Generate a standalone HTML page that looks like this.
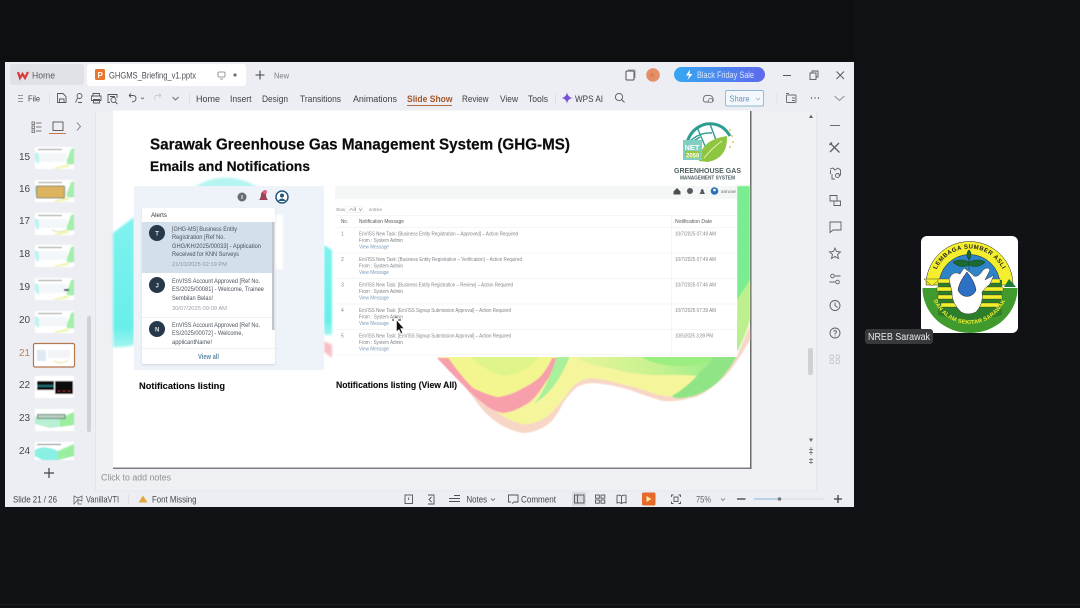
<!DOCTYPE html>
<html><head><meta charset="utf-8"><style>
html,body{margin:0;padding:0;background:#111215;width:1080px;height:608px;overflow:hidden}
svg{display:block;position:absolute;left:0;top:0}
text{font-family:"Liberation Sans",sans-serif}
</style></head><body>
<svg width="1080" height="608" viewBox="0 0 1080 608" xmlns="http://www.w3.org/2000/svg">
<defs>
<filter id="b3" x="-5%" y="-5%" width="110%" height="110%"><feGaussianBlur stdDeviation=".35"/></filter>
<filter id="b5" x="-10%" y="-10%" width="120%" height="120%"><feGaussianBlur stdDeviation=".6"/></filter>
<filter id="b1" x="-20%" y="-20%" width="140%" height="140%"><feGaussianBlur stdDeviation="1"/></filter>
<filter id="b2" x="-20%" y="-20%" width="140%" height="140%"><feGaussianBlur stdDeviation="2"/></filter>
<linearGradient id="pill" x1="0" x2="1" y1="0" y2="0"><stop offset="0" stop-color="#35a8f2"/><stop offset="1" stop-color="#5f68ee"/></linearGradient>
<linearGradient id="grn" x1="0" x2="1" y1="0" y2="0"><stop offset="0" stop-color="#e6f59a"/><stop offset=".5" stop-color="#c8f290"/><stop offset="1" stop-color="#8dea8a"/></linearGradient>
<linearGradient id="cy" x1="0" x2="0" y1="0" y2="1"><stop offset="0" stop-color="#7ff2ee"/><stop offset=".85" stop-color="#68efe9"/><stop offset="1" stop-color="#a5f5f0"/></linearGradient>
<g id="th">
<rect x="0" y="0" width="39" height="22" fill="#fff"/>
<path d="M0 6Q2 4 4 8V17Q1 16 0 12Z" fill="#bdf4ef"/>
<path d="M39 1L39 17Q33 19 31 15Q34 8 36 2Z" fill="#a6eeae"/>
<path d="M18 21Q26 19 33 17L34 20L22 22Z" fill="#f2f5b5"/>
<rect x="3" y="2" width="24" height="1" fill="#888"/>
<rect x="4" y="6" width="28" height="9" fill="#f4f7f9"/>
</g>
<path id="arcT" d="M933 285A36.500 36.500 0 0 1 1006 285"/>
<path id="arcB" d="M930.500 285A39 39 0 0 0 1008.500 285"/>
</defs>

<rect width="1080" height="608" fill="#111215"/>
<rect x="0" y="0" width="855" height="61" fill="#0e0f11"/>
<rect x="0" y="604" width="1080" height="1" fill="#1d1e20"/>

<!-- window -->
<rect x="5" y="62" width="849" height="445" fill="#eceef3"/>
<rect x="96" y="111" width="721" height="380" fill="#eef0f4"/>

<!-- tab bar -->
<rect x="10" y="64" width="74" height="21" rx="3" fill="#dfe1e7"/>
<rect x="87" y="64" width="159" height="22" rx="3" fill="#fff"/>
<g filter="url(#b3)">
<path d="M18 72L20 78L22.500 74L25 78L28 72" fill="none" stroke="#d93a3a" stroke-width="2.200"/>
<text x="32" y="78.300" font-size="9" fill="#5a5c62" textLength="23" lengthAdjust="spacingAndGlyphs">Home</text>
<rect x="95" y="69" width="10" height="11" rx="1.500" fill="#e8762d"/>
<text x="97.500" y="78" font-size="8" fill="#fff" font-weight="bold">P</text>
<text x="109" y="78.300" font-size="9" fill="#4c4e54" textLength="87" lengthAdjust="spacingAndGlyphs">GHGMS_Briefing_v1.pptx</text>
<rect x="218" y="72" width="7" height="5" rx="1" fill="none" stroke="#7d8087" stroke-width=".8"/><path d="M220 79h3" stroke="#7d8087" stroke-width=".8"/>
<circle cx="235" cy="75" r="1.600" fill="#6d7076"/>
<path d="M260 70.500V79.500M255.500 75H264.500" stroke="#44464c" stroke-width="1.100"/>
<text x="274" y="78.300" font-size="8.500" fill="#7d8087" textLength="15" lengthAdjust="spacingAndGlyphs">New</text>

<rect x="626" y="71" width="8" height="9" rx="1" fill="#f4f4f6" stroke="#4d4f55" stroke-width="1"/><path d="M628 70h7v8" fill="none" stroke="#7f8187" stroke-width=".8"/>
<circle cx="653" cy="75" r="6.800" fill="#e58f66"/>
<text x="650" y="77.500" font-size="6.500" fill="#c76a43">A</text>
<rect x="674" y="67" width="91" height="15" rx="7.500" fill="url(#pill)"/>
<path d="M690 69.500L686 75.500H689L687.500 80L692.500 74H689.500Z" fill="#fff"/>
<text x="697" y="78" font-size="8.800" fill="#dfe8fb" textLength="57" lengthAdjust="spacingAndGlyphs">Black Friday Sale</text>
<path d="M783 75.500H791" stroke="#55575d" stroke-width="1"/>
<rect x="810" y="73" width="6" height="6.500" fill="none" stroke="#55575d" stroke-width=".9"/><path d="M812 73V71H818V77H816" fill="none" stroke="#55575d" stroke-width=".9"/>
<path d="M836.500 71.500L844 79M844 71.500L836.500 79" stroke="#55575d" stroke-width=".9"/>

<!-- ribbon -->
<path d="M18 95.500h5M18 98.500h5M18 101.500h5" stroke="#777" stroke-width=".8"/>
<text x="28" y="101.500" font-size="8.500" fill="#3e4046" textLength="12" lengthAdjust="spacingAndGlyphs">File</text>
<path d="M49.500 93V104" stroke="#dcdde1" stroke-width=".8"/>
<g fill="none" stroke="#55575d" stroke-width=".9">
<path d="M57.500 93.500H63L66 96.500V102.500H57.500ZM59.500 102.500V99H64V102.500"/>
<circle cx="79.500" cy="96" r="2.500"/><path d="M77.500 98L75.500 102.500M78 102.500H82"/>
<path d="M93 96V93.500H99.500V96M91.500 96H101V100.500H91.500ZM93.500 99.500H99.500V103H93.500Z"/>
<path d="M110 102.500H108V94.500H117V98M110 96.500H115"/><circle cx="113.500" cy="100" r="2.500"/><path d="M115.300 102L117.500 104"/>
<path d="M129 95.500L131 93.500M129 95.500L131 97.500M129 95.500H133Q136 95.500 136 98.500T132 102"/>
<path d="M141 97.500L142.500 99L144 97.500" stroke-width=".7"/>
<path d="M161 95.500L159 93.500M161 95.500L159 97.500M161 95.500H156Q154 96 155 100" stroke="#c8cace"/>
<path d="M172.500 97L175.500 100L178.500 97" stroke="#66686e"/>
</g>
<path d="M189.500 93V104" stroke="#dcdde1" stroke-width=".8"/>
<g font-size="9.300" fill="#3f4147">
<text x="196" y="101.800" textLength="24" lengthAdjust="spacingAndGlyphs">Home</text>
<text x="230" y="101.800" textLength="21.500" lengthAdjust="spacingAndGlyphs">Insert</text>
<text x="262" y="101.800" textLength="26" lengthAdjust="spacingAndGlyphs">Design</text>
<text x="300" y="101.800" textLength="41" lengthAdjust="spacingAndGlyphs">Transitions</text>
<text x="353" y="101.800" textLength="44" lengthAdjust="spacingAndGlyphs">Animations</text>
<text x="407" y="101.800" textLength="45.500" lengthAdjust="spacingAndGlyphs" font-weight="bold" fill="#a3552a">Slide Show</text>
<text x="462" y="101.800" textLength="26.500" lengthAdjust="spacingAndGlyphs">Review</text>
<text x="500" y="101.800" textLength="18" lengthAdjust="spacingAndGlyphs">View</text>
<text x="528" y="101.800" textLength="20" lengthAdjust="spacingAndGlyphs">Tools</text>
<text x="575" y="101.800" textLength="28" lengthAdjust="spacingAndGlyphs">WPS AI</text>
</g>
<rect x="407" y="105" width="45" height="1" fill="#b26a3f"/>
<path d="M555.500 93V104" stroke="#dcdde1" stroke-width=".8"/>
<path d="M567 92.500Q567.800 97.200 572.500 98Q567.800 98.800 567 103.500Q566.200 98.800 561.500 98Q566.200 97.200 567 92.500Z" fill="#7a4fd6"/>
<circle cx="619" cy="97" r="3.600" fill="none" stroke="#55575d" stroke-width=".9"/><path d="M621.500 99.500L624.500 102.500" stroke="#55575d" stroke-width=".9"/>
<path d="M705 102H711Q714 102 713 98.500Q712 95 708.500 95.500Q704 94.500 703.500 98.500Q702.500 101.500 705 102Z" fill="none" stroke="#66686e" stroke-width=".9"/>
<circle cx="710.500" cy="100.500" r="2" fill="#eceef3" stroke="#66686e" stroke-width=".7"/>
<rect x="725.500" y="90.500" width="38" height="15.500" rx="1.500" fill="#f4f7fb" stroke="#8db8d6" stroke-width=".9"/>
<text x="729.500" y="101.500" font-size="8.500" fill="#5f93bd" textLength="20" lengthAdjust="spacingAndGlyphs">Share</text>
<path d="M756 98L758 100L760 98" fill="none" stroke="#7fa8c8" stroke-width=".7"/>
<path d="M777 93V104" stroke="#dcdde1" stroke-width=".8"/>
<g fill="none" stroke="#66686e" stroke-width=".9">
<rect x="786.500" y="95" width="9.500" height="7.500" rx="1"/><path d="M786 93.500H789M792 98H795M792 100.500H795"/>
</g>
<circle cx="811.500" cy="98" r=".7" fill="#555"/><circle cx="815" cy="98" r=".7" fill="#555"/><circle cx="818.500" cy="98" r=".7" fill="#555"/>
<path d="M834.500 96L839.500 100.500L844.500 96" fill="none" stroke="#8a8c92" stroke-width=".9"/>
</g>

<!-- left panel -->
<path d="M95.500 111V491" stroke="#e2e4e9" stroke-width="1"/>
<g filter="url(#b3)">
<g fill="none" stroke="#777" stroke-width=".9">
<rect x="32" y="122" width="2.500" height="2.500"/><rect x="32" y="126" width="2.500" height="2.500"/><rect x="32" y="130" width="2.500" height="2.500"/>
<path d="M36 123H41.500M36 127H41.500M36 131H41.500"/>
<rect x="53" y="122" width="10" height="8.500" stroke="#555"/>
<path d="M77 122.500L80.500 126.500L77 130.500"/>
</g>
<rect x="49" y="133" width="17" height="1" fill="#c9744a"/>
<g font-size="10" fill="#44464c">
<text x="19" y="160">15</text><text x="19" y="192">16</text><text x="19" y="224">17</text><text x="19" y="257">18</text><text x="19" y="290">19</text><text x="19" y="323">20</text>
<text x="19" y="356" fill="#c08057">21</text><text x="19" y="388">22</text><text x="19" y="421">23</text><text x="19" y="454">24</text>
</g>
</g>
<g filter="url(#b5)">
<use href="#th" x="35" y="147"/>
<use href="#th" x="35" y="180"/>
<rect x="36.500" y="186" width="28" height="12" rx="1" fill="#dcb35e" stroke="#5d6a54" stroke-width=".8"/>
<use href="#th" x="35" y="213"/>
<path d="M52 230Q60 234 68 229" stroke="#d9e3b0" stroke-width="1" fill="none"/>
<use href="#th" x="35" y="245"/>
<use href="#th" x="35" y="278"/>
<rect x="64" y="289" width="5" height="2" fill="#446"/>
<use href="#th" x="35" y="311"/>
</g>
<rect x="33.500" y="343.500" width="41" height="23.500" rx="1.500" fill="#fff" stroke="#b5764c" stroke-width="1.200"/>
<g filter="url(#b5)">
<rect x="37" y="350" width="9" height="11" fill="#dfe9f5"/><rect x="48" y="350" width="22" height="8" fill="#f2f4f7"/>
<path d="M54 361Q62 365 68 360" stroke="#eee2a5" fill="none"/>
<rect x="35" y="376" width="39" height="22" fill="#fff"/>
<rect x="37" y="381" width="17" height="9" fill="#0a0c0e"/><rect x="55" y="381" width="18" height="13" fill="#0a0c0e"/>
<rect x="37" y="385" width="17" height="2" fill="#1c6f77"/><path d="M58 391h2M63 391h2M68 391h2" stroke="#a33"/>
<rect x="35" y="409" width="39" height="22" fill="#fff"/>
<path d="M35 417Q50 412 60 418L74 412V425L50 428L35 424Z" fill="#b9f0d3"/>
<path d="M60 418L74 412V425L60 427Z" fill="#9cee9f"/>
<rect x="37.500" y="414.500" width="27.500" height="4" fill="#b8cfc0" stroke="#43655f" stroke-width=".8"/>
<rect x="35" y="442" width="39" height="18" fill="#fff"/>
<path d="M35 450Q44 444 58 451L74 444V456L58 460H42L35 456Z" fill="#8af0e4"/><path d="M58 451L74 444V456L58 460Z" fill="#9cee9f"/>
<rect x="37" y="444" width="24" height="1" fill="#666"/>
</g>
<rect x="87" y="316" width="4" height="116" rx="2" fill="#cfd1d5"/>
<path d="M49 468V478M44 473H54" stroke="#3f4147" stroke-width="1.200"/>

<!-- slide -->
<rect x="113" y="111" width="638" height="358" fill="#7d7d7d"/>
<rect x="113" y="110.500" width="637" height="357" fill="#fff"/>
<rect x="750" y="111" width="1.500" height="358" fill="#6c6c6c"/>

<!-- backgrounds -->
<g filter="url(#b1)">
<path d="M190 190Q225 165 262 190L262 192H190Z" fill="#b5f4f0"/>
<path d="M113 233L134 217V345Q124 348 113 347Z" fill="url(#cy)"/>
<path d="M324 245L332 250V335L324 335Z" fill="url(#cy)"/>
<path d="M324 341L332 345V358L324 352Z" fill="#f8c0c6"/>
</g>
<g filter="url(#b5)">
<path d="M437 356H737L750 325V340Q730 375 717 383Q700 398 690 398Q678 402 663 401Q645 396 630 390Q610 384 593 383Q585 383 577 387Q570 393 563 403Q555 420 547 425Q535 433 523 433Q505 430 490 417Q480 408 473 397Q455 375 437 356Z" fill="#f8d6c6"/>
<path d="M437 356H735Q725 372 712 381Q698 396 685 396Q670 398 655 394Q640 388 625 385Q605 379 590 378Q578 380 570 390Q560 405 548 416Q535 425 522 424Q505 420 493 408Q480 392 463 378Z" fill="#f5f59c"/>
<path d="M437 358H557Q552 375 545 383Q538 395 530 402Q515 412 503 413Q490 410 483 403Q473 396 463 385Q450 372 437 358Z" fill="#f89fac"/>
<path d="M447 356H553Q548 368 540 377Q532 384 523 388Q510 396 497 397Q485 394 473 388Q460 375 447 356Z" fill="#f3f68f"/>
<path d="M470 356H540Q530 372 505 376Q485 372 470 356Z" fill="#dff58a"/>
<path d="M557 356H570Q565 368 558 380Q548 395 535 403Q548 385 557 356Z" fill="#a9f09a"/>
<path d="M572 356H737Q726 372 712 378Q690 374 665 375Q635 376 610 368Q590 366 572 356Z" fill="url(#grn)"/>
<path d="M640 356H720Q705 365 680 366Q655 366 640 356Z" fill="#9bee80"/>
<path d="M737 356Q728 372 717 383Q702 395 688 397Q675 400 672 396Q690 385 700 372Q710 364 714 356Z" fill="#8fe586"/>
<path d="M737 186H750V315Q746 335 737 352Z" fill="#79ed8f"/>
<path d="M737 300L750 280V320Q746 335 738 350Z" fill="#bdf08c"/>
</g>

<!-- title -->
<text x="150" y="149.500" font-size="15.500" font-weight="bold" fill="#0c0c0c" textLength="420" lengthAdjust="spacingAndGlyphs" stroke="#0c0c0c" stroke-width=".2">Sarawak Greenhouse Gas Management System (GHG-MS)</text>
<text x="150" y="171" font-size="13.500" font-weight="bold" fill="#0c0c0c" textLength="160" lengthAdjust="spacingAndGlyphs" stroke="#0c0c0c" stroke-width=".2">Emails and Notifications</text>
<text x="139" y="389" font-size="9" font-weight="bold" fill="#0c0c0c" textLength="86" lengthAdjust="spacingAndGlyphs" stroke="#0c0c0c" stroke-width=".1">Notifications listing</text>
<text x="336" y="388" font-size="9" font-weight="bold" fill="#0c0c0c" textLength="121" lengthAdjust="spacingAndGlyphs" stroke="#0c0c0c" stroke-width=".1">Notifications listing (View All)</text>

<!-- logo -->
<g filter="url(#b3)">
<path d="M686 146Q690 128 706 124Q722 122 730 136" fill="none" stroke="#2e9c90" stroke-width="3"/>
<path d="M690 141Q700 132 712 133M697 127L705 146M710 124L716 140M686 146L700 137" fill="none" stroke="#2e9c90" stroke-width="1.400"/>
<path d="M699 161Q700 140 727 136Q728 158 708 162Z" fill="#8fc63f"/>
<path d="M704 158Q712 148 722 141" stroke="#e4f2b5" stroke-width="1" fill="none"/>
<rect x="683" y="140" width="19" height="20" fill="#7fd0c0"/>
<text x="684.500" y="150" font-size="7.500" font-weight="bold" fill="#fff">NET</text>
<rect x="685" y="151" width="15" height="7" fill="#9ac742"/>
<text x="686" y="157.500" font-size="6" font-weight="bold" fill="#fff">2050</text>
<circle cx="730" cy="130" r="1" fill="#dfc95a"/><circle cx="732" cy="136" r="1" fill="#dfc95a"/><circle cx="733" cy="142" r="1" fill="#dfc95a"/><circle cx="730" cy="147" r="1" fill="#dfc95a"/>
<text x="674" y="173" font-size="7.500" font-weight="bold" fill="#4f5f60" textLength="67" lengthAdjust="spacingAndGlyphs">GREENHOUSE GAS</text>
<text x="680" y="179.500" font-size="5" font-weight="bold" fill="#4f5f60" textLength="55" lengthAdjust="spacingAndGlyphs">MANAGEMENT SYSTEM</text>
</g>

<!-- left notification panel -->
<rect x="134" y="186" width="190" height="184" fill="#eef3fa"/>
<rect x="274" y="215" width="9" height="54" fill="#fff" filter="url(#b5)"/>
<rect x="142" y="209" width="133" height="156" fill="#cfd2d6" filter="url(#b1)" opacity=".9"/>
<rect x="142" y="208" width="133" height="156" rx="2" fill="#fff"/>
<rect x="142" y="222" width="132" height="51" fill="#d3dfeb"/>
<rect x="272" y="222" width="2.500" height="108" fill="#c0c6cc"/>
<path d="M142 317.500H272M142 348.500H275" stroke="#e8eaed" stroke-width=".8"/>
<g filter="url(#b3)">
<circle cx="242" cy="197" r="4.500" fill="#666d70"/><rect x="241.500" y="195" width="1" height="4" fill="#eef3fa"/>
<path d="M259 200Q261 198 261 194Q262 191 264 191Q266 191 266 194Q266 198 268 200Z" fill="#9d4058"/><circle cx="265" cy="192" r="2" fill="#df5f7a"/>
<circle cx="282" cy="197" r="6" fill="#fff" stroke="#27597a" stroke-width="1.500"/><circle cx="282" cy="195.500" r="2" fill="#27597a"/><path d="M278 201Q282 196 286 201" fill="#27597a"/>
<text x="151" y="217" font-size="6.500" fill="#333" textLength="16" lengthAdjust="spacingAndGlyphs">Alerts</text>
<circle cx="157" cy="233" r="8" fill="#27374a"/><text x="155.300" y="235.500" font-size="6" font-weight="bold" fill="#dfe5ec">T</text>
<circle cx="157" cy="285" r="8" fill="#27374a"/><text x="155.500" y="287.500" font-size="6" font-weight="bold" fill="#dfe5ec">J</text>
<circle cx="157" cy="329" r="8" fill="#27374a"/><text x="155" y="331.500" font-size="6" font-weight="bold" fill="#dfe5ec">N</text>
<g font-size="6" fill="#4b525c">
<text x="172" y="231" textLength="65" lengthAdjust="spacingAndGlyphs">[GHG-MS] Business Entity</text>
<text x="172" y="239" textLength="53" lengthAdjust="spacingAndGlyphs">Registration [Ref No.</text>
<text x="172" y="248" textLength="89" lengthAdjust="spacingAndGlyphs">GHG/KH/2025/00033] - Application</text>
<text x="172" y="256" textLength="67" lengthAdjust="spacingAndGlyphs">Received for KNN Surveys</text>
<text x="172" y="283" textLength="88" lengthAdjust="spacingAndGlyphs">EnVISS Account Approved [Ref No.</text>
<text x="172" y="291" textLength="92" lengthAdjust="spacingAndGlyphs">ES/2025/00081] - Welcome, Trainee</text>
<text x="172" y="300" textLength="41" lengthAdjust="spacingAndGlyphs">Sembilan Belas!</text>
<text x="172" y="327" textLength="88" lengthAdjust="spacingAndGlyphs">EnVISS Account Approved [Ref No.</text>
<text x="172" y="335" textLength="71" lengthAdjust="spacingAndGlyphs">ES/2025/00072] - Welcome,</text>
<text x="172" y="344" textLength="40" lengthAdjust="spacingAndGlyphs">applicantName!</text>
</g>
<text x="172" y="266" font-size="5.500" fill="#8a96a3" textLength="55" lengthAdjust="spacingAndGlyphs">21/10/2025 02:19 PM</text>
<text x="172" y="310" font-size="5.500" fill="#9aa0a8" textLength="55" lengthAdjust="spacingAndGlyphs">30/07/2025 09:09 AM</text>
<text x="198" y="359" font-size="7" font-weight="bold" fill="#5f8aa3" textLength="21" lengthAdjust="spacingAndGlyphs">View all</text>
</g>

<!-- right table card -->
<rect x="335" y="186" width="402" height="171" fill="#fff"/>
<rect x="335" y="186" width="402" height="13" fill="#f3f8f7"/>
<g stroke="#f0f2f4" stroke-width=".7">
<path d="M336 227.500H737M336 253H737M336 278.500H737M336 304H737M336 329.500H737M336 355H737M671.500 215V355M336 215.500H737"/>
</g>
<g filter="url(#b3)">
<path d="M673.500 191.500L677 188L680.500 191.500V194.500H673.500Z" fill="#4c4f55"/>
<circle cx="690" cy="191" r="3" fill="#55585e"/>
<path d="M699.500 194Q701 192 701 190Q702 188 703.500 190Q703.500 192 705 194Z" fill="#55585e"/>
<circle cx="714.500" cy="191" r="3.800" fill="#2a72b5"/><circle cx="714.500" cy="190" r="1.300" fill="#fff"/>
<text x="721" y="193" font-size="4.500" fill="#666" textLength="15" lengthAdjust="spacingAndGlyphs">anncse</text>
<text x="336" y="211" font-size="4.500" fill="#8a8d92" textLength="9" lengthAdjust="spacingAndGlyphs">Show</text>
<text x="349" y="211" font-size="4.500" fill="#8a8d92" textLength="14" lengthAdjust="spacingAndGlyphs">All   ∨</text>
<text x="369" y="211" font-size="4.500" fill="#8a8d92" textLength="13" lengthAdjust="spacingAndGlyphs">entries</text>
<rect x="346" y="206.500" width="17" height="6" fill="none" stroke="#e5e7ea" stroke-width=".5"/>
<g font-size="5" fill="#55595f">
<text x="341" y="223" textLength="7" lengthAdjust="spacingAndGlyphs">No.</text>
<text x="359" y="223" textLength="45" lengthAdjust="spacingAndGlyphs">Notification Message</text>
<text x="675" y="223" textLength="37" lengthAdjust="spacingAndGlyphs">Notification Date</text>
</g>
<g font-size="5" fill="#80858b">
<text x="341" y="235.500">1</text><text x="341" y="261">2</text><text x="341" y="286.500">3</text><text x="341" y="312">4</text><text x="341" y="337.500">5</text>
<text x="359" y="235.500" textLength="159" lengthAdjust="spacingAndGlyphs">EnVISS New Task: [Business Entity Registration – Approved] – Action Required</text>
<text x="359" y="242" textLength="44" lengthAdjust="spacingAndGlyphs">From : System Admin</text>
<text x="359" y="261" textLength="163" lengthAdjust="spacingAndGlyphs">EnVISS New Task: [Business Entity Registration – Verification] – Action Required</text>
<text x="359" y="267.500" textLength="44" lengthAdjust="spacingAndGlyphs">From : System Admin</text>
<text x="359" y="286.500" textLength="154" lengthAdjust="spacingAndGlyphs">EnVISS New Task: [Business Entity Registration – Review] – Action Required</text>
<text x="359" y="293" textLength="44" lengthAdjust="spacingAndGlyphs">From : System Admin</text>
<text x="359" y="312" textLength="152" lengthAdjust="spacingAndGlyphs">EnVISS New Task: [EnVISS Signup Submission Approval] – Action Required</text>
<text x="359" y="318.500" textLength="44" lengthAdjust="spacingAndGlyphs">From : System Admin</text>
<text x="359" y="337.500" textLength="152" lengthAdjust="spacingAndGlyphs">EnVISS New Task: [EnVISS Signup Submission Approval] – Action Required</text>
<text x="359" y="344" textLength="44" lengthAdjust="spacingAndGlyphs">From : System Admin</text>
<text x="675" y="235.500" textLength="41" lengthAdjust="spacingAndGlyphs">10/7/2025 07:49 AM</text>
<text x="675" y="261" textLength="41" lengthAdjust="spacingAndGlyphs">10/7/2025 07:49 AM</text>
<text x="675" y="286.500" textLength="41" lengthAdjust="spacingAndGlyphs">10/7/2025 07:46 AM</text>
<text x="675" y="312" textLength="41" lengthAdjust="spacingAndGlyphs">10/7/2025 07:39 AM</text>
<text x="675" y="337.500" textLength="38" lengthAdjust="spacingAndGlyphs">10/5/2025 3:39 PM</text>
</g>
<g font-size="5" fill="#7d9ab8">
<text x="359" y="248.500" textLength="30" lengthAdjust="spacingAndGlyphs">View Message</text>
<text x="359" y="274" textLength="30" lengthAdjust="spacingAndGlyphs">View Message</text>
<text x="359" y="299.500" textLength="30" lengthAdjust="spacingAndGlyphs">View Message</text>
<text x="359" y="325" textLength="30" lengthAdjust="spacingAndGlyphs">View Message</text>
<text x="359" y="350.500" textLength="30" lengthAdjust="spacingAndGlyphs">View Message</text>
</g>
</g>
<!-- cursor -->
<path d="M396.500 320V331.500L399 329.500L401 333.500L402.500 332.500L400.500 328.500H404Z" fill="#111" stroke="#fff" stroke-width=".5"/>
<path d="M396 316.500V318M392 320H394M398 320H401" stroke="#222" stroke-width="1"/>

<!-- notes -->
<rect x="96" y="469" width="721" height="22" fill="#eff0f3"/>
<text x="101" y="480.500" font-size="9" fill="#8f9195" textLength="70" lengthAdjust="spacingAndGlyphs" filter="url(#b3)">Click to add notes</text>

<!-- right scroll + side -->
<rect x="817" y="111" width="37" height="380" fill="#eceef3"/>
<path d="M817 111V491" stroke="#dfe1e6" stroke-width="1"/>
<rect x="808" y="348" width="5" height="27" rx="2" fill="#cfd1d5"/>
<g fill="#666" filter="url(#b3)">
<path d="M811 114.500L813 118H809Z"/>
<path d="M809 438.500H813L811 442Z"/>
<path d="M809 449.500H813M809 452.500H813M811 447V455" stroke="#666" stroke-width=".7"/>
<path d="M809 459.500H813M809 462.500H813M811 458V464" stroke="#666" stroke-width=".7"/>
</g>
<g fill="none" stroke="#5d5f65" stroke-width=".9" filter="url(#b3)">
<path d="M830 125.500H840"/>
<path d="M830 143L839 152M830 152L839 143M829.500 145L832 142.500M837 150L839.500 152.500" stroke-width="1.300"/>
<path d="M830 169L833 168L835 170L838 168L840.500 170V175H838.500M830.500 174V170M832 174V179H835"/><circle cx="837.500" cy="175.500" r="2"/>
<path d="M830 195.500H837V201H830ZM834 201H840.500V205.500H834Z"/>
<path d="M830 222H841V230H833L830 232.500Z"/>
<path d="M835 248L836.500 251.500L840.500 252L837.500 254.500L838.500 258.500L835 256.500L831.500 258.500L832.500 254.500L829.500 252L833.500 251.500Z"/>
<circle cx="832.500" cy="276" r="1.800"/><circle cx="837.500" cy="282" r="1.800"/><path d="M835 276H840.500M829.500 282H835"/>
<circle cx="835" cy="305.500" r="5"/><path d="M835 302.500V305.500L837.500 307.500"/>
<circle cx="835" cy="333" r="5"/><path d="M833.500 331.500Q835 329.500 836.500 331.500Q836.500 333 835 333.500V334.500M835 335.500V336.500"/>
<g stroke="#c8cace"><rect x="830" y="355" width="3.500" height="3.500" rx="1"/><rect x="836" y="355" width="3.500" height="3.500" rx="1"/><rect x="830" y="360" width="3.500" height="3.500" rx="1"/><rect x="836" y="360" width="3.500" height="3.500" rx="1"/></g>
</g>

<!-- status bar -->
<rect x="5" y="491" width="849" height="16" fill="#eceef3"/>
<path d="M96 491H817" stroke="#e3e5ea" stroke-width=".8"/>
<g filter="url(#b3)">
<text x="13" y="502.300" font-size="8.800" fill="#45474d" textLength="44" lengthAdjust="spacingAndGlyphs">Slide 21 / 26</text>
<path d="M74 496L78 498L82 496V501L78 499.500L74 504ZM78 499V504H82" fill="none" stroke="#666" stroke-width=".8"/>
<text x="86" y="502.300" font-size="8.800" fill="#45474d" textLength="33" lengthAdjust="spacingAndGlyphs">VanillaVTI</text>
<path d="M128.500 494V504" stroke="#e0dcdc" stroke-width=".8"/>
<path d="M143 495.500L147.500 502.500H138.500Z" fill="#e2a73a"/>
<text x="152" y="502.300" font-size="8.800" fill="#45474d" textLength="44.500" lengthAdjust="spacingAndGlyphs">Font Missing</text>
<g fill="none" stroke="#4f5157" stroke-width=".9">
<rect x="405" y="495" width="7.500" height="8.500"/><path d="M408.700 497.500V500"/>
<path d="M428 495H434V504H428M431.500 497L429 499.500L431.500 502" />
<path d="M454 495.500H460M449 498.500H460M449 501.500H460"/>
<path d="M491 498.500L493 500.500L495 498.500" stroke-width=".7"/>
<path d="M511 502H508.500V495H518V502H514L512 503.500"/>
</g>
<text x="466.500" y="502.300" font-size="8.800" fill="#45474d" textLength="20.500" lengthAdjust="spacingAndGlyphs">Notes</text>
<text x="521" y="502.300" font-size="8.800" fill="#45474d" textLength="35" lengthAdjust="spacingAndGlyphs">Comment</text>
<rect x="572" y="492" width="14" height="14" rx="1.500" fill="#d8dadd"/>
<g fill="none" stroke="#4f5157" stroke-width=".9">
<rect x="574.500" y="495" width="9.500" height="8"/><path d="M577.500 495V503"/>
<rect x="595.500" y="495" width="3.800" height="3.200"/><rect x="601" y="495" width="3.800" height="3.200"/><rect x="595.500" y="500" width="3.800" height="3.200"/><rect x="601" y="500" width="3.800" height="3.200"/>
<path d="M621.500 496Q619 494.500 617 495.500V503Q619 502 621.500 503.500Q624 502 626 503V495.500Q624 494.500 621.500 496ZM621.500 496V503.500"/>
<path d="M671.500 497V495H673.500M678.500 495H680.500V497M680.500 501.500V503.500H678.500M673.500 503.500H671.500V501.500"/><rect x="674" y="497" width="4" height="4.500"/>
</g>
<rect x="642" y="492.500" width="13.500" height="13" rx="1.500" fill="#e66a2c"/>
<path d="M646.500 496L651.500 499L646.500 502Z" fill="#ffe9a8"/>
<text x="696" y="502.300" font-size="8.800" fill="#666" textLength="15" lengthAdjust="spacingAndGlyphs">75%</text>
<path d="M721 498.500L723 500.500L725 498.500" fill="none" stroke="#666" stroke-width=".7"/>
<path d="M737 499H745.500" stroke="#3d3f45" stroke-width="1.300"/>
<path d="M754 499H779" stroke="#8db5d8" stroke-width="1"/><path d="M779 499H824" stroke="#d9dbe0" stroke-width="1"/>
<circle cx="779.500" cy="499" r="1.800" fill="#777"/>
<path d="M834 499H842M838 495V503" stroke="#3d3f45" stroke-width="1.300"/>
</g>

<!-- right video tile -->
<rect x="921" y="236" width="97" height="97" rx="6" fill="#fff"/>
<g filter="url(#b3)">
<path d="M926 285A43.500 43.500 0 0 1 1013 285Z" fill="#f3ee2e" stroke="#222" stroke-width=".5"/>
<path d="M939 285A30.500 30.500 0 0 1 1000 285Z" fill="#2f83c9" stroke="#222" stroke-width=".5"/>
<path d="M922.500 288H1017.500A47.500 45 0 0 1 922.500 288Z" fill="#3f9a2f"/>
<path d="M924 279L940 279L932 286Z" fill="#f3ee2e" stroke="#222" stroke-width=".4"/>
<path d="M1004 287L1016 287L1009 279Z" fill="#1e7b38"/>
<path d="M938 280H1002V315Q970 325 938 315Z" fill="#2f7d2b"/>
<g fill="#f3ee2e" stroke="#222" stroke-width=".3">
<rect x="938" y="279" width="62" height="4"/><rect x="937" y="287" width="66" height="4"/><rect x="938" y="295" width="64" height="4"/><rect x="941" y="303" width="58" height="4"/>
</g>
<path d="M949 279Q953 270 960 274L964 268Q970 272 974 276Q978 278 983 270Q988 266 990 270L985 280L994 275L990 284Q985 288 982 292Q984 303 976 312Q968 316 961 312Q951 302 952 292Z" fill="#fff" stroke="#333" stroke-width=".5"/>
<path d="M967 272Q975 282 976 290A9.500 9.500 0 0 1 958 290Q959 282 967 272Z" fill="#2f6fc4" stroke="#222" stroke-width=".5"/>
<path d="M969 270V258M969 262Q960 258 953 262Q960 269 969 265Q978 269 985 262Q978 258 969 262ZM969 260Q965 254 969 250Q973 254 969 260Z" fill="#1f6b30" stroke="#134a20" stroke-width=".6"/>
<text font-size="6" font-weight="bold" fill="#222" letter-spacing=".5"><textPath href="#arcT" startOffset="50%" text-anchor="middle">LEMBAGA SUMBER ASLI</textPath></text>
<text font-size="5.600" font-weight="bold" fill="#f3ee2e" letter-spacing=".2"><textPath href="#arcB" startOffset="50%" text-anchor="middle">DAN ALAM SEKITAR SARAWAK</textPath></text>
</g>
<rect x="865" y="329" width="68" height="15" rx="3" fill="#38393c"/>
<text x="868" y="340" font-size="10" fill="#e8e8e8" textLength="62" lengthAdjust="spacingAndGlyphs" filter="url(#b3)">NREB Sarawak</text>
</svg>
</body></html>
